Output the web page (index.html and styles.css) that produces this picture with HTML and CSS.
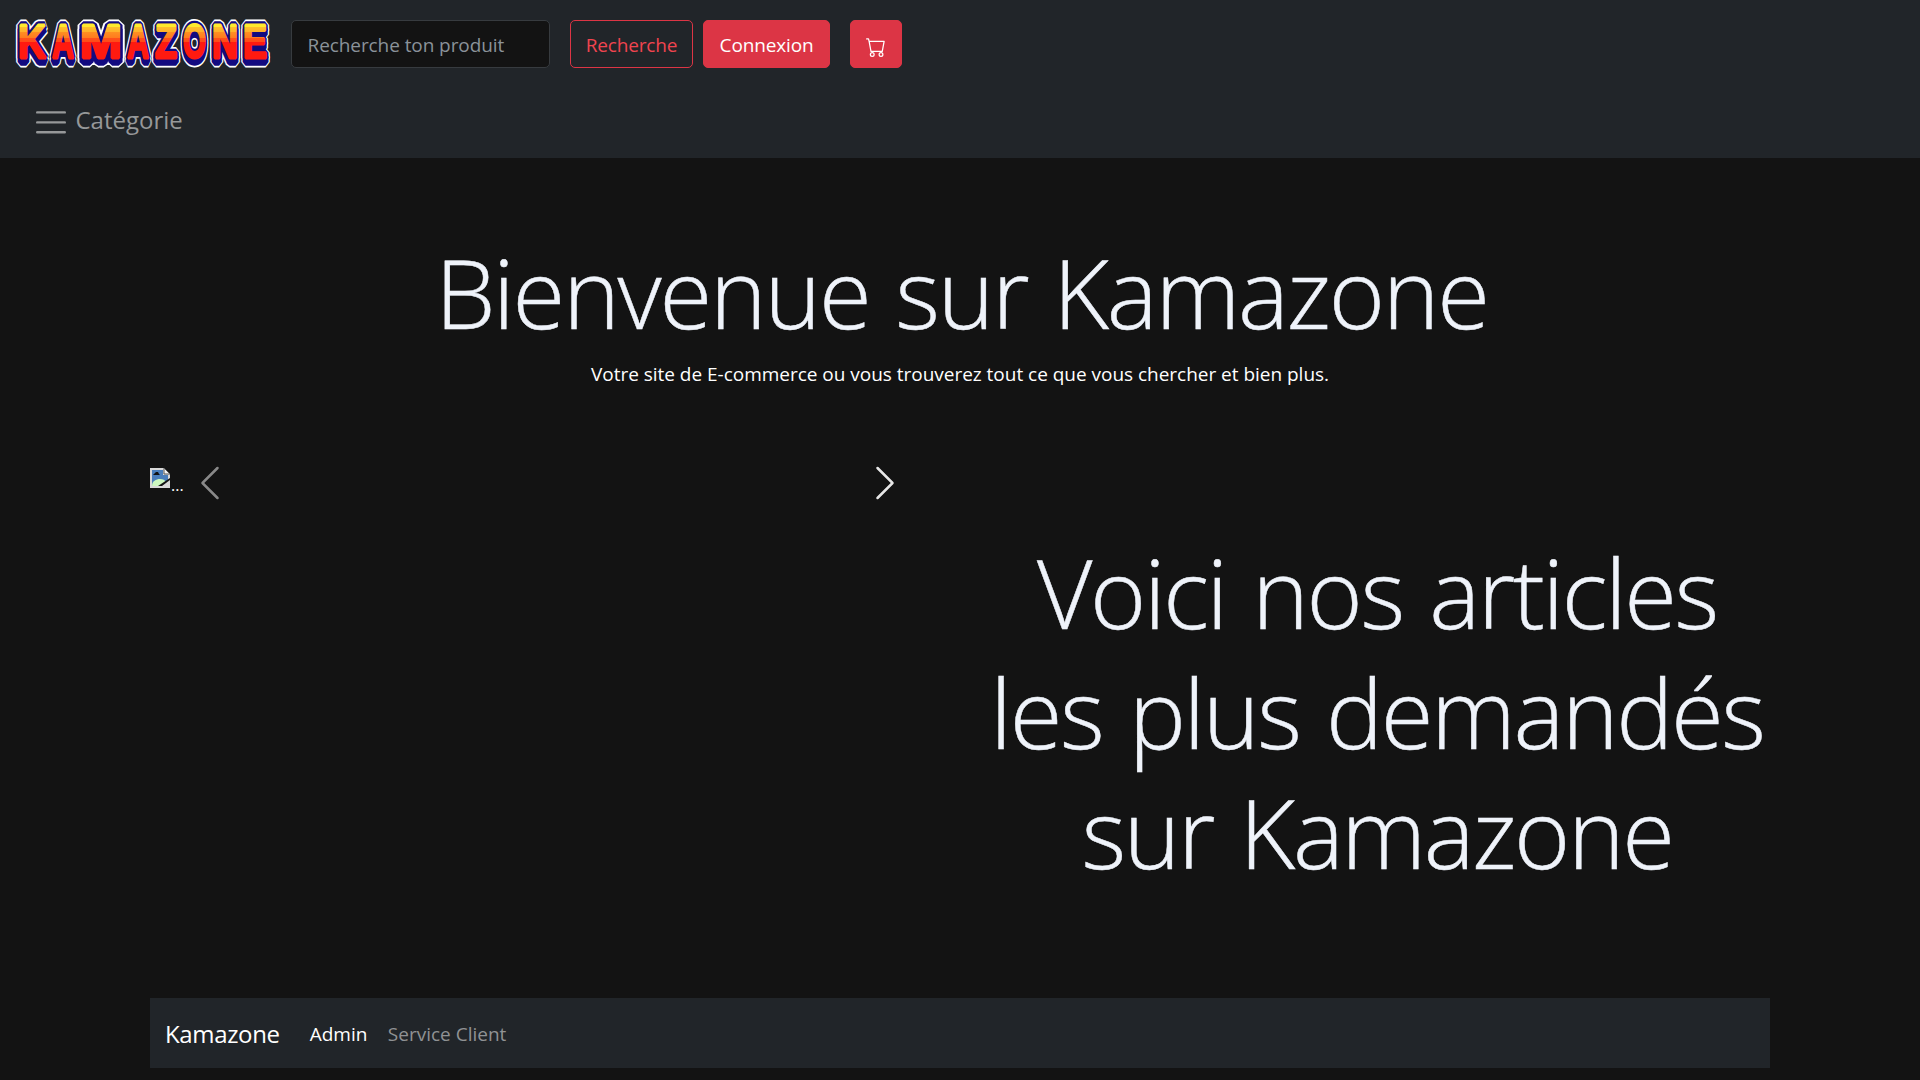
FILE: index.html
```html
<!DOCTYPE html>
<html lang="fr">
<head>
<meta charset="utf-8">
<title>Kamazone</title>
<link rel="stylesheet" href="styles.css">
</head>
<body>
<header class="navbar">
  <div class="navbar-row">
    <a class="logo" href="#" aria-label="Kamazone">
      <svg width="256" height="52" viewBox="15 18 256 52">
        <defs>
          <linearGradient id="fire" gradientUnits="userSpaceOnUse" x1="0" y1="22" x2="0" y2="60">
            <stop offset="0" stop-color="#ffe92e"/>
            <stop offset=".13" stop-color="#ffe92e"/>
            <stop offset=".13" stop-color="#ffc02c"/>
            <stop offset=".27" stop-color="#ffb02a"/>
            <stop offset=".27" stop-color="#ff8f22"/>
            <stop offset=".42" stop-color="#ff7a1e"/>
            <stop offset=".42" stop-color="#ff521a"/>
            <stop offset=".52" stop-color="#ff4a18"/>
            <stop offset=".52" stop-color="#ff1a10"/>
            <stop offset="1" stop-color="#ff1a10"/>
          </linearGradient>
          <text id="word" class="logo-word" y="58"><tspan x="18" textLength="28" lengthAdjust="spacingAndGlyphs">K</tspan><tspan x="52" textLength="22" lengthAdjust="spacingAndGlyphs">A</tspan><tspan x="80" textLength="42" lengthAdjust="spacingAndGlyphs">M</tspan><tspan x="127" textLength="22" lengthAdjust="spacingAndGlyphs">A</tspan><tspan x="155" textLength="22" lengthAdjust="spacingAndGlyphs">Z</tspan><tspan x="183" textLength="23" lengthAdjust="spacingAndGlyphs">O</tspan><tspan x="212" textLength="26" lengthAdjust="spacingAndGlyphs">N</tspan><tspan x="243" textLength="24" lengthAdjust="spacingAndGlyphs">E</tspan></text>
        </defs>
        <use href="#word" class="logo-edge"/>
        <use href="#word" class="logo-edge" y="4"/>
        <use href="#word" class="logo-shade"/>
        <use href="#word" class="logo-shade" y="4"/>
        <use href="#word" class="logo-face"/>
      </svg>
    </a>
    <form class="search">
      <input class="search-input" type="search" placeholder="Recherche ton produit">
      <button class="btn btn-outline" type="button">Recherche</button>
    </form>
    <button class="btn btn-login" type="button">Connexion</button>
    <button class="btn btn-cart" type="button" aria-label="Panier">
      <svg width="20" height="20" viewBox="0 0 16 16" fill="currentColor"><path d="M0 1.5A.5.5 0 0 1 .5 1H2a.5.5 0 0 1 .485.379L2.89 3H14.5a.5.5 0 0 1 .491.592l-1.5 8A.5.5 0 0 1 13 12H4a.5.5 0 0 1-.491-.408L2.01 3.607 1.61 2H.5a.5.5 0 0 1-.5-.5zM3.102 4l1.313 7h8.17l1.313-7H3.102zM5 12a2 2 0 1 0 0 4 2 2 0 0 0 0-4zm7 0a2 2 0 1 0 0 4 2 2 0 0 0 0-4zm-7 1a1 1 0 1 1 0 2 1 1 0 0 1 0-2zm7 0a1 1 0 1 1 0 2 1 1 0 0 1 0-2z"/></svg>
    </button>
  </div>
  <a class="category" href="#">
    <svg width="30" height="24" viewBox="0 0 30 24" stroke="currentColor" stroke-width="2.4" stroke-linecap="round"><path d="M1.2 2.4h27.6M1.2 12.4h27.6M1.2 22.3h27.6"/></svg>
    <span>Catégorie</span>
  </a>
</header>
<main class="container">
  <section class="hero">
    <h1 class="display">Bienvenue sur Kamazone</h1>
    <p class="lead">Votre site de E-commerce ou vous trouverez tout ce que vous chercher et bien plus.</p>
  </section>
  <section class="featured">
    <div class="carousel">
      <div class="slide">
        <svg width="20" height="20" viewBox="0 0 20 20">
          <path d="M0 0h14l6 6v14H0z" fill="#d9d9d9"/>
          <path d="M2 2h11v5h5v5L9 18H2z" fill="#4a7ebb"/>
          <path d="M2 18c0-5 4-7 8-7 3 0 5 1 6 3l-5 4z" fill="#cdf8c0"/>
          <path d="M3 7l2-2 1-1h2l1 2 1 1z" fill="#111"/>
          <path d="M14 0v6h6z" fill="#f4f4f4" stroke="#555" stroke-width="1"/>
          <path d="M20 10v2l-8 6H8z" fill="#131313"/>
          <path d="M20 13v7H10z" fill="#d9d9d9"/>
        </svg>
        <span class="slide-alt">...</span>
      </div>
      <button class="control control-prev" type="button" aria-label="Précédent">
        <svg width="40" height="40" viewBox="0 0 16 16" fill="currentColor"><path d="M11.354 1.646a.5.5 0 0 1 0 .708L5.707 8l5.647 5.646a.5.5 0 0 1-.708.708l-6-6a.5.5 0 0 1 0-.708l6-6a.5.5 0 0 1 .708 0z"/></svg>
      </button>
      <button class="control control-next" type="button" aria-label="Suivant">
        <svg width="40" height="40" viewBox="0 0 16 16" fill="currentColor"><path d="M4.646 1.646a.5.5 0 0 1 .708 0l6 6a.5.5 0 0 1 0 .708l-6 6a.5.5 0 0 1-.708-.708L10.293 8 4.646 2.354a.5.5 0 0 1 0-.708z"/></svg>
      </button>
    </div>
    <h2 class="display featured-title">Voici nos articles<br>les plus demandés<br>sur Kamazone</h2>
  </section>
  <footer class="footer">
    <a class="brand" href="#">Kamazone</a>
    <a class="footer-link active" href="#">Admin</a>
    <a class="footer-link" href="#">Service Client</a>
  </footer>
</main>
</body>
</html>
```
FILE: styles.css
```css
* { box-sizing: border-box; margin: 0; }
body {
  background: #131313;
  color: #fff;
  font: 19px/30px "Open Sans", "Noto Sans", sans-serif;
  overflow: hidden;
}
a { color: inherit; text-decoration: none; }
svg { display: block; flex: none; }
button, input { font: inherit; color: inherit; }

.navbar {
  height: 157.5px;
  padding: 10px 15px;
  background: #212529;
}
.navbar-row { display: flex; align-items: center; height: 68px; }
.logo { margin-right: 20px; }
.logo svg { overflow: visible; }
.logo-word { font: bold 48px "Liberation Sans", sans-serif; stroke-linejoin: bevel; }
.logo-edge { fill: #fff; stroke: #fff; stroke-width: 11px; }
.logo-shade { fill: #120a80; stroke: #120a80; stroke-width: 7.5px; }
.logo-face { fill: url(#fire); stroke: url(#fire); stroke-width: 3px; }

.search { display: flex; gap: 20px; margin-right: 10px; }
.search-input {
  width: 259px;
  height: 48px;
  padding: 2px 15.5px 0;
  border: 1px solid #373b3f;
  border-radius: 5px;
  background: #131313;
  letter-spacing: -0.08px;
  appearance: none;
}
.search-input::placeholder { color: #8a9299; opacity: 1; }
.btn {
  height: 48px;
  padding: 2px 0 0;
  border: 1px solid #dc3545;
  border-radius: 5px;
  background: #dc3545;
  letter-spacing: -0.15px;
}
.btn-outline { width: 123px; background: transparent; color: #f0444f; }
.btn-login { width: 127px; margin-right: 20px; }
.btn-cart { width: 52px; padding: 6px 0 0 15px; }

.category {
  display: flex;
  gap: 10px;
  padding: 23px 0 0 20.5px;
  color: #969899;
  font-size: 24px;
  line-height: 37px;
}
.category svg { margin-top: 9px; }

.container { width: 1620px; margin: 0 auto; }
.hero { padding-top: 74px; text-align: center; }
.display {
  padding-left: 3px;
  color: #eff3fa;
  font-size: 96px;
  font-weight: 300;
  line-height: 120px;
  letter-spacing: -2.2px;
  word-spacing: 3px;
  -webkit-text-stroke: .5px #eff3fa;
}
.lead { margin-top: 7px; letter-spacing: -0.02px; }

.featured { display: grid; grid-template-columns: 795px 795px; gap: 30px; padding-top: 79px; }
.carousel { position: relative; height: 30px; }
.slide { display: flex; gap: 1px; }
.slide-alt { font-size: 16px; line-height: 34px; }
.control {
  position: absolute;
  top: 0;
  width: 15%;
  height: 30px;
  display: flex;
  align-items: center;
  justify-content: center;
  padding: 0;
  border: 0;
  background: none;
}
.control-prev { left: 0; opacity: .5; }
.control-next { right: 0; opacity: .9; }
.featured-title { padding: 64px 0 0 9px; letter-spacing: -2.4px; word-spacing: 4px; text-align: center; }

.footer {
  display: flex;
  align-items: center;
  height: 70px;
  margin-top: 106px;
  padding: 2px 15px 0;
  background: #212529;
}
.brand { margin-right: 30px; font-size: 24px; letter-spacing: -0.35px; }
.footer-link { margin-right: 20.5px; color: #909294; }
.active { color: #fff; }
```
